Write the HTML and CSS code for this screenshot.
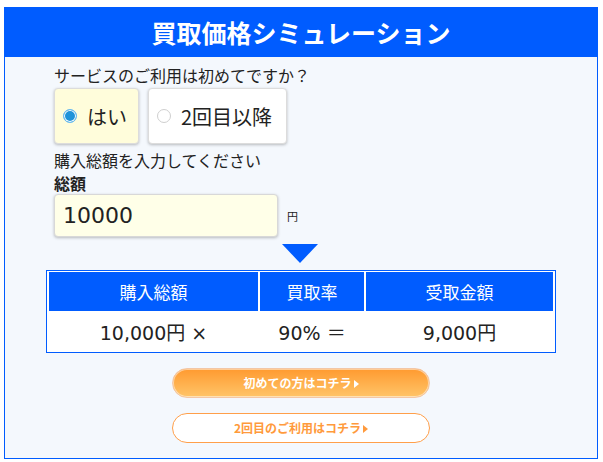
FILE: index.html
```html
<!DOCTYPE html>
<html lang="ja">
<head>
    <meta charset="UTF-8">
    <meta name="viewport" content="width=device-width, initial-scale=1.0">
    <title>買取価格シミュレーション</title>
    <link rel="stylesheet" href="styles.css">
</head>
<body>
    <div class="sim">
        <h1 class="sim-title">買取価格シミュレーション</h1>
        <div class="sim-body">
            <p class="label">サービスのご利用は初めてですか？</p>
            <div class="choices">
                <label class="choice yes selected"><span class="radio"></span>はい</label>
                <label class="choice again"><span class="radio"></span>2回目以降</label>
            </div>

            <p class="label">購入総額を入力してください</p>
            <p class="label bold">総額</p>
            <div class="amount-row">
                <div class="amount-input">10000</div>
                <span class="yen">円</span>
            </div>

            <div class="arrow"></div>

            <table class="result">
                <tr>
                    <th class="col-total">購入総額</th>
                    <th class="col-rate">買取率</th>
                    <th class="col-pay">受取金額</th>
                </tr>
                <tr>
                    <td>10,000円 ×</td>
                    <td>90% ＝</td>
                    <td>9,000円</td>
                </tr>
            </table>

            <div class="links">
                <a class="link-btn first">初めての方はコチラ</a>
                <a class="link-btn repeat">2回目のご利用はコチラ</a>
            </div>
        </div>
    </div>
</body>
</html>
```

FILE: styles.css
```css
body {
    margin: 0;
    padding: 7px 5px 4px 4px;
    background-color: #ffffff;
    font-family: "Noto Sans CJK JP", "Noto Sans", sans-serif;
    color: #222;
}
.sim {
    border: 1px solid #005cff;
    background-color: #f4f8fd;
}
.sim-title {
    margin: 0;
    height: 49px;
    line-height: 49px;
    background-color: #005cff;
    color: white;
    text-align: center;
    font-size: 25px;
    font-weight: bold;
}
.sim-body {
    padding: 7px 0 15px 49px;
}
.label {
    margin: 0;
    font-size: 16px;
    line-height: 23px;
}
.label.bold {
    font-weight: bold;
    line-height: 22px;
}
.choices {
    display: flex;
    gap: 9px;
    margin: 1px 0 5px;
}
.choice {
    display: flex;
    align-items: center;
    gap: 10px;
    box-sizing: border-box;
    height: 56px;
    padding-left: 8px;
    background-color: white;
    border: 1px solid #dcdcdc;
    border-radius: 4px;
    box-shadow: 0 1px 3px rgba(0,0,0,0.25);
    font-size: 20px;
}
.choice.yes {
    width: 85px;
}
.choice.again {
    width: 139px;
}
.choice.selected {
    background-color: #fffddb;
}
.radio {
    width: 14px;
    height: 14px;
    border-radius: 50%;
    border: 1px solid #cfcfcf;
    background-color: white;
    box-sizing: border-box;
}
.choice.selected .radio {
    background-color: #1f93d9;
    border: 1px solid #6cbcf0;
    box-shadow: inset 0 0 0 1px white;
}
.amount-row {
    display: flex;
    align-items: center;
    gap: 9px;
}
.amount-input {
    width: 214px;
    height: 41px;
    line-height: 41px;
    padding-left: 8px;
    background-color: #ffffe8;
    border: 1px solid #d8d8d8;
    border-radius: 4px;
    box-shadow: 0 1px 3px rgba(0,0,0,0.25);
    font-family: "DejaVu Sans", "Noto Sans CJK JP", sans-serif;
    font-size: 22px;
}
.yen {
    font-size: 11px;
}
.arrow {
    width: 0;
    height: 0;
    margin: 7px 0 0 228px;
    border-left: 18px solid transparent;
    border-right: 18px solid transparent;
    border-top: 19px solid #005cff;
}
.result {
    margin: 7px 0 0 -8px;
    width: 510px;
    border: 1px solid #005cff;
    border-spacing: 2px 1px;
    background-color: white;
}
.result th {
    height: 37px;
    background-color: #005cff;
    color: white;
    font-size: 17px;
    font-weight: normal;
}
.col-total { width: 207px; }
.col-rate { width: 102px; }
.result td {
    height: 37px;
    text-align: center;
    font-family: "DejaVu Sans", "Noto Sans CJK JP", sans-serif;
    font-size: 19px;
}
.links {
    display: flex;
    flex-direction: column;
    align-items: center;
    gap: 15px;
    margin: 15px 0 0 -49px;
}
.link-btn {
    display: block;
    box-sizing: border-box;
    width: 258px;
    height: 30px;
    line-height: 28px;
    border-radius: 15px;
    text-align: center;
    font-size: 12px;
    font-weight: bold;
    cursor: pointer;
}
.link-btn::after {
    content: "";
    display: inline-block;
    margin-left: 2px;
    border-top: 4px solid transparent;
    border-bottom: 4px solid transparent;
    border-left: 5px solid currentColor;
}
.link-btn.first {
    background: linear-gradient(#ff9a30, #ffc468);
    border: 1px solid #f3c7a6;
    color: white;
    box-shadow: inset 0 0 0 1px rgba(255,255,255,0.5);
}
.link-btn.repeat {
    background-color: white;
    border: 1px solid #ff9f4a;
    color: #ff9a3c;
}
```
